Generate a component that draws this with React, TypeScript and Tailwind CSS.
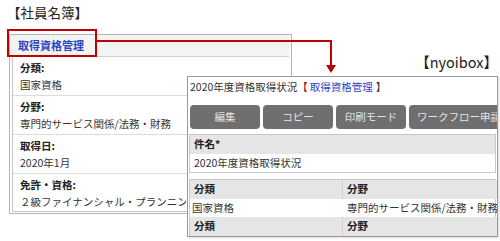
import React from 'react';

const jp = { fontFamily: '"Meiryo", "Noto Sans CJK JP", "Noto Sans", sans-serif' };

const rows = [
  { label: '分類:', value: '国家資格' },
  { label: '分野:', value: '専門的サービス関係/法務・財務' },
  { label: '取得日:', value: '2020年1月' },
  { label: '免許・資格:', value: '２級ファイナンシャル・プランニング技能士' },
];

const buttons = ['編集', 'コピー', '印刷モード'];

export default function App() {
  return (
    <div className="relative w-[500px] h-[241px] overflow-hidden bg-white text-[#333]" style={jp}>
      {/* left: 社員名簿 */}
      <div className="pl-[7px] pt-[3px] text-[13.5px] leading-[18px] text-[#222]">【社員名簿】</div>

      <div className="ml-[9px] mt-[13px] w-[283px] border border-[#b5b5b5] bg-white pb-[1px] pr-[2px]">
        <div className="h-[22px] bg-[#f3f3f3] border-b border-[#d0d0d0] pl-[8px] flex items-center">
          <span className="text-[11px] leading-none font-bold text-[#2a44c4]">取得資格管理</span>
        </div>
        <div className="ml-[2px] border-l border-b border-[#c8c8c8]">
          {rows.map((r, i) => (
            <div
              key={r.label}
              className={`pl-[7px] pt-[2px] whitespace-nowrap overflow-hidden ${i < rows.length - 1 ? 'h-[39px] border-b border-[#dcdcdc]' : 'h-[37px]'}`}
            >
              <div className="text-[10.5px] leading-[17px] font-bold text-[#222]">{r.label}</div>
              <div className="w-[166px] overflow-hidden text-[10.5px] leading-[17px]">{r.value}</div>
            </div>
          ))}
        </div>
      </div>

      {/* red highlight + arrow */}
      <div className="absolute left-[7px] top-[29px] w-[90px] h-[28px] border-2 border-[#c00000]" />
      <svg className="absolute left-0 top-0" width="500" height="241">
        <polyline points="97,41 331,41 331,66" fill="none" stroke="#c00000" strokeWidth="2" />
        <polygon points="326,65 336,65 331,73" fill="#c00000" />
      </svg>

      <div className="absolute right-[2px] top-[52px] text-[14.5px] leading-[20px] text-[#222]">【nyoibox】</div>

      {/* right: nyoibox panel */}
      <div className="absolute left-[187px] top-[76px] w-[311px] h-[161px] overflow-hidden border border-[#9a9a9a] bg-white shadow-[1px_1px_2px_rgba(0,0,0,0.15)]">
        <div className="h-[21px] pl-[2px] flex items-center text-[10.5px] leading-none whitespace-nowrap">
          <span>2020年度資格取得状況</span>
          <span className="text-[#a01010]">【</span>
          <span className="text-[#2a44c4] ml-[2px]">取得資格管理</span>
          <span className="ml-[3px]">】</span>
        </div>

        <div className="mt-[7px] pl-[2px] flex gap-[3px] whitespace-nowrap">
          {buttons.map((b) => (
            <div
              key={b}
              className="w-[70px] shrink-0 h-[24px] rounded-[4px] bg-[#6f6f6f] text-[#e4e4e4] text-[10.5px] leading-none flex items-center justify-center"
            >
              {b}
            </div>
          ))}
          <div className="w-[100px] shrink-0 h-[24px] rounded-[4px] bg-[#6f6f6f] text-[#e4e4e4] text-[10.5px] leading-none flex items-center pl-[8px]">
            ワークフロー申請
          </div>
        </div>

        <div className="mt-[5px] ml-[1px] mr-[1px] border border-[#c8c8c8]">
          <div className="h-[19px] bg-[#e5e5e5] pl-[4px] flex items-center text-[10.5px] leading-none font-bold text-[#222]">件名*</div>
          <div className="h-[18px] pl-[4px] flex items-center text-[10.5px] leading-none">2020年度資格取得状況</div>
        </div>

        <div className="mt-[6px] ml-[1px] mr-[1px] border border-[#c8c8c8] border-b-0 grid grid-cols-[153px_1fr] text-[10.5px] leading-none whitespace-nowrap">
          <div className="h-[19px] bg-[#e5e5e5] pl-[4px] flex items-center font-bold text-[#222] border-r border-[#d0d0d0]">分類</div>
          <div className="h-[19px] bg-[#e5e5e5] pl-[4px] flex items-center font-bold text-[#222]">分野</div>
          <div className="h-[18px] pl-[2px] flex items-center">国家資格</div>
          <div className="h-[18px] pl-[4px] flex items-center">専門的サービス関係/法務・財務</div>
          <div className="h-[19px] bg-[#e5e5e5] pl-[4px] flex items-center font-bold text-[#222] border-r border-[#d0d0d0]">分類</div>
          <div className="h-[19px] bg-[#e5e5e5] pl-[4px] flex items-center font-bold text-[#222]">分野</div>
        </div>
      </div>
    </div>
  );
}
